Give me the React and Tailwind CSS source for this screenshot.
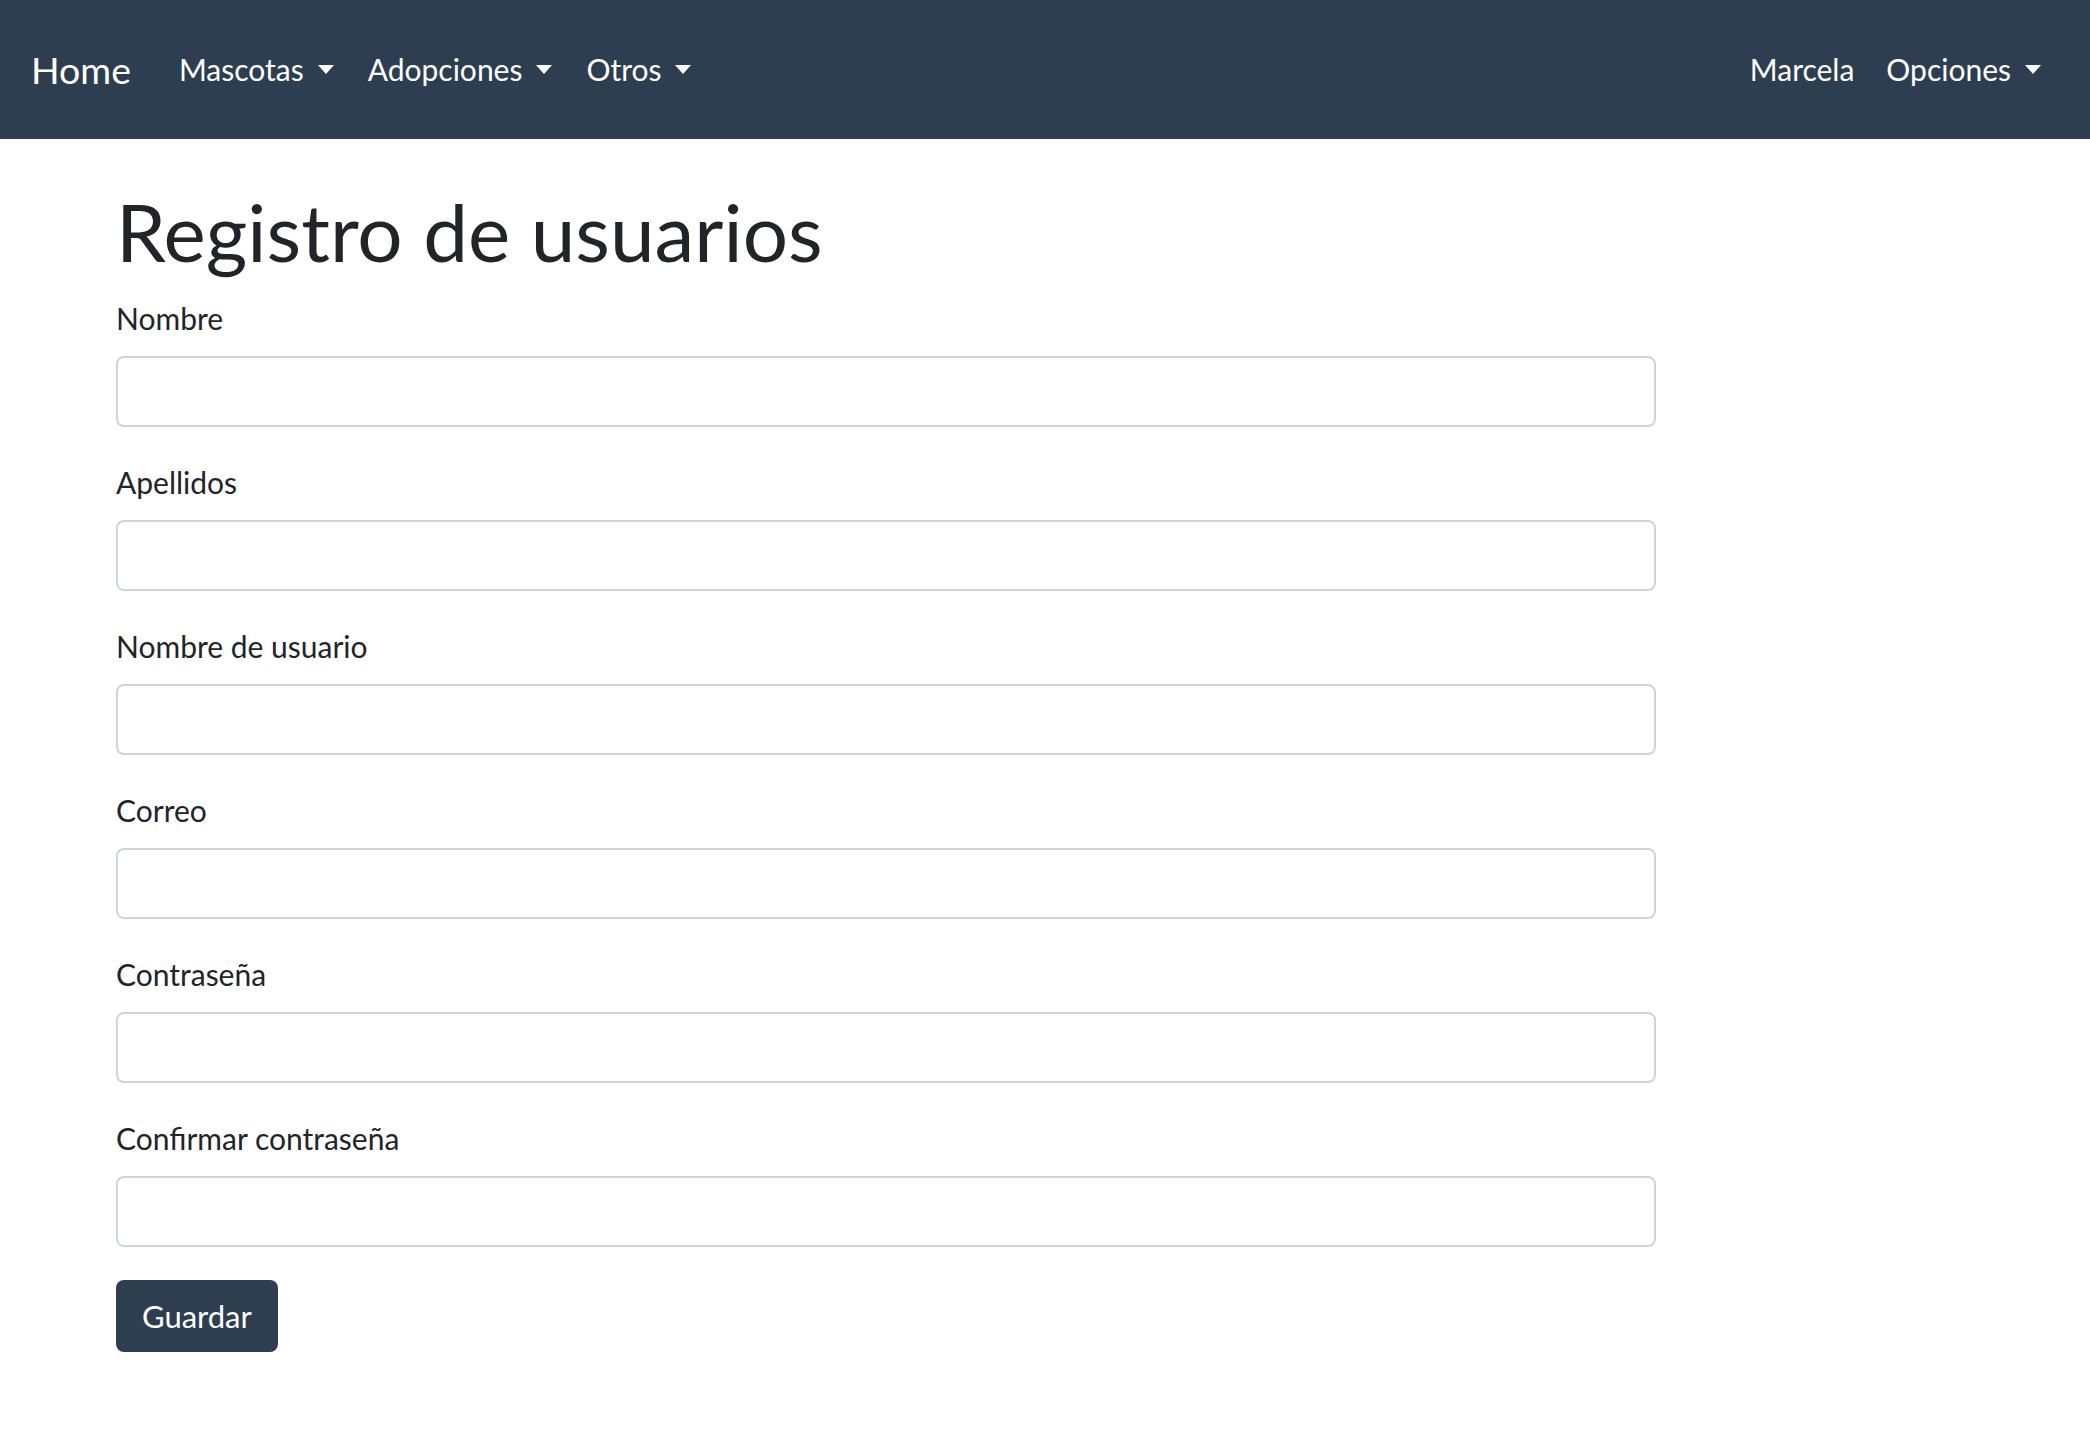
import { useState } from "react";

const menus = ["Mascotas", "Adopciones", "Otros"];

const fields = [
  { id: "nombre", label: "Nombre", type: "text" },
  { id: "apellidos", label: "Apellidos", type: "text" },
  { id: "usuario", label: "Nombre de usuario", type: "text" },
  { id: "correo", label: "Correo", type: "email" },
  { id: "password", label: "Contraseña", type: "password" },
  { id: "password2", label: "Confirmar contraseña", type: "password" },
];

function Caret() {
  return (
    <span className="inline-block w-0 h-0 ml-[14px] border-x-[8px] border-x-transparent border-t-[9px] border-t-white" />
  );
}

export default function App() {
  const [values, setValues] = useState({});

  const handleChange = (e) => {
    setValues({ ...values, [e.target.name]: e.target.value });
  };

  return (
    <div className="min-h-screen bg-white font-['Lato',sans-serif]">
      {/* Navbar */}
      <nav className="h-[139px] bg-[#2c3e50] flex items-center justify-between pl-[31px] pr-[49px] text-white">
        <div className="flex items-center">
          <a href="#" className="text-[37.5px] leading-[54px] mr-[48px]">Home</a>
          <ul className="flex items-center gap-[34px]">
            {menus.map((m) => (
              <li key={m} className="flex items-center text-[30px] leading-[45px] cursor-pointer">
                {m}
                <Caret />
              </li>
            ))}
          </ul>
        </div>
        <ul className="flex items-center gap-[32px] text-[30px] leading-[45px]">
          <li>Marcela</li>
          <li className="flex items-center cursor-pointer">
            Opciones
            <Caret />
          </li>
        </ul>
      </nav>

      {/* Form */}
      <main className="pl-[116px] pt-[44px] pb-[60px]">
        <h1 className="text-[80px] leading-[96px] text-[#212529]">Registro de usuarios</h1>
        <form className="w-[1540px] mt-[17px]" onSubmit={(e) => e.preventDefault()}>
          {fields.map((f) => (
            <div key={f.id} className="mb-[33px]">
              <label htmlFor={f.id} className="block text-[30px] leading-[45px] text-[#212529] mb-[15px]">
                {f.label}
              </label>
              <input
                id={f.id}
                name={f.id}
                type={f.type}
                value={values[f.id] || ""}
                onChange={handleChange}
                className="block w-full h-[71px] px-[20px] text-[30px] border-2 border-[#ced4da] rounded-[8px] bg-white outline-none"
              />
            </div>
          ))}
          <button
            type="submit"
            className="h-[72px] px-[26px] bg-[#2c3e50] text-white text-[31px] rounded-[8px]"
          >
            Guardar
          </button>
        </form>
      </main>
    </div>
  );
}
